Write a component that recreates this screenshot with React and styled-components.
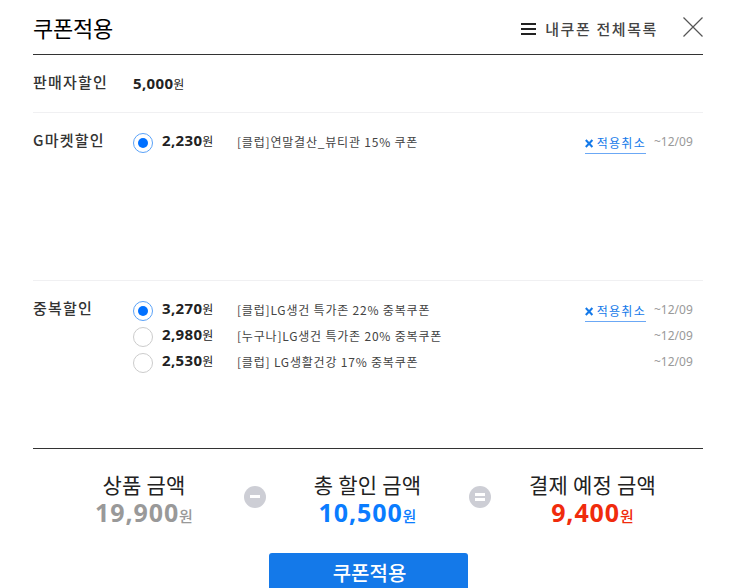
import React, { useState } from 'react';
import styled, { createGlobalStyle } from 'styled-components';

const GlobalStyle = createGlobalStyle`
  * {
    box-sizing: border-box;
  }
  body {
    margin: 0;
    overflow: hidden;
    background-color: #fff;
    font-family: 'Noto Sans', 'Noto Sans CJK KR', sans-serif;
    color: #222;
  }
`;

const Layer = styled.div`
  width: 736px;
  height: 588px;
  padding: 0 33px;
  overflow: hidden;
`;

const Header = styled.header`
  display: flex;
  align-items: center;
  height: 55px;
  border-bottom: 1px solid #333;
`;

const Title = styled.h1`
  flex: 1;
  margin: 0;
  font: 400 22px/30px 'Noto Sans CJK KR', sans-serif;
  letter-spacing: -0.2px;
  color: #000;
`;

const ListButton = styled.button`
  display: flex;
  align-items: center;
  gap: 9px;
  margin: 4px 25px 0 0;
  padding: 0;
  border: 0;
  background: none;
  font: 500 15px/20px 'Noto Sans CJK KR', sans-serif;
  letter-spacing: 1.6px;
  color: #444;
`;

const CloseButton = styled.button`
  display: flex;
  padding: 0;
  border: 0;
  background: none;
`;

const Section = styled.section`
  display: flex;
  height: ${({ $height }) => $height}px;
  padding-top: 17px;
  border-bottom: 1px solid ${({ $last }) => ($last ? '#333' : '#f0f0f2')};
`;

const Label = styled.h2`
  width: 100px;
  margin: -1px 0 0;
  font: 500 15px/21px 'Noto Sans CJK KR', sans-serif;
  letter-spacing: 1.2px;
  color: #333;
`;

const Options = styled.div`
  flex: 1;
`;

const Option = styled.div`
  display: flex;
  align-items: center;
  height: 26px;
  padding-right: 10px;
`;

const Radio = styled.button`
  display: flex;
  align-items: center;
  justify-content: center;
  width: 20px;
  height: 20px;
  margin-right: 9px;
  padding: 0;
  border: 1px solid ${({ $checked }) => ($checked ? '#5aa2f8' : '#ccc')};
  border-radius: 50%;
  background-color: #fff;

  &::after {
    content: '';
    width: 10px;
    height: 10px;
    border-radius: 50%;
    background-color: ${({ $checked }) => ($checked ? '#0070ff' : '#fff')};
  }
`;

const Price = styled.span`
  width: 75px;
  margin-top: ${({ $single }) => ($single ? -3 : -5)}px;
  font-size: 15px;
  line-height: 20px;
  font-weight: 700;
  letter-spacing: 0.35px;
  white-space: nowrap;
`;

const Won = styled.span`
  font-family: 'Noto Sans CJK KR', sans-serif;
  font-size: ${({ $size }) => $size}px;
  font-weight: ${({ $weight }) => $weight || 400};
  letter-spacing: 0;
`;

const CouponName = styled.span`
  flex: 1;
  margin-top: -2px;
  font: 400 12px/18px 'Noto Sans CJK KR', sans-serif;
  letter-spacing: 0.8px;
  white-space: nowrap;
  color: #444;
`;

const CancelButton = styled.button`
  display: flex;
  align-items: center;
  gap: 3px;
  height: 21px;
  margin: 1px 8px 0 0;
  padding: 0;
  border: 0;
  border-bottom: 1px solid #6ba8f5;
  background: none;
  font: 400 12px/18px 'Noto Sans CJK KR', sans-serif;
  letter-spacing: 1.3px;
  color: #1479e9;
`;

const DueDate = styled.span`
  width: 39px;
  margin-top: -3px;
  font-size: 12px;
  line-height: 18px;
  white-space: nowrap;
  color: #999;
`;

const Summary = styled.div`
  display: grid;
  grid-template-columns: 200px 22px 203px 22px 203px;
  align-items: center;
  height: 104px;
  padding: 0 0 8px 11px;
`;

const Total = styled.div`
  padding-top: 6px;
  text-align: center;
  white-space: nowrap;
  color: ${({ $color }) => $color};
`;

const TotalLabel = styled.div`
  font: 400 21px/28px 'Noto Sans CJK KR', sans-serif;
  letter-spacing: 0.2px;
  color: #222;
`;

const TotalValue = styled.div`
  font-size: 25px;
  line-height: 28px;
  font-weight: 700;
  letter-spacing: 0.9px;
`;

const ApplyButton = styled.button`
  display: block;
  width: 199px;
  height: 40px;
  margin: 0 auto;
  padding: 0 0 0 3px;
  border: 0;
  border-radius: 3px;
  background-color: #1479e9;
  font: 500 20px/40px 'Noto Sans CJK KR', sans-serif;
  color: #fff;
`;

const marketCoupons = [
  { price: '2,230', name: '[클럽]연말결산_뷰티관 15% 쿠폰', due: '~12/09' }
];

const extraCoupons = [
  { price: '3,270', name: '[클럽]LG생건 특가존 22% 중복쿠폰', due: '~12/09' },
  { price: '2,980', name: '[누구나]LG생건 특가존 20% 중복쿠폰', due: '~12/09' },
  { price: '2,530', name: '[클럽] LG생활건강 17% 중복쿠폰', due: '~12/09' }
];

const CouponOptions = ({ coupons }) => {
  const [selected, setSelected] = useState(0);

  return (
    <Options>
      {coupons.map((coupon, i) => (
        <Option key={coupon.name}>
          <Radio $checked={selected === i} onClick={() => setSelected(i)} />
          <Price>
            {coupon.price}
            <Won $size={12}>원</Won>
          </Price>
          <CouponName>{coupon.name}</CouponName>
          {selected === i && (
            <CancelButton onClick={() => setSelected(null)}>
              <svg width="9" height="9" viewBox="0 0 9 9">
                <path d="M0.8 1l6.6 7M7.4 1l-6.6 7" stroke="#1479e9" strokeWidth="2" />
              </svg>
              적용취소
            </CancelButton>
          )}
          <DueDate>{coupon.due}</DueDate>
        </Option>
      ))}
    </Options>
  );
};

const SignIcon = ({ equal }) => (
  <svg width="22" height="22" viewBox="0 0 22 22">
    <circle cx="11" cy="11" r="11" fill="#cdced5" />
    {equal ? (
      <path d="M6 7h10v3H6zM6 12h10v3H6z" fill="#fff" />
    ) : (
      <path d="M6 9h10v3H6z" fill="#fff" />
    )}
  </svg>
);

const TotalItem = ({ label, value, color }) => (
  <Total $color={color}>
    <TotalLabel>{label}</TotalLabel>
    <TotalValue>
      {value}
      <Won $size={15} $weight={500}>원</Won>
    </TotalValue>
  </Total>
);

const App = () => (
  <>
    <GlobalStyle />
    <Layer>
      <Header>
        <Title>쿠폰적용</Title>
        <ListButton>
          <svg width="15" height="12" viewBox="0 0 15 12">
            <path d="M0 0h15v2H0zM0 5h15v2H0zM0 10h15v2H0z" fill="#222" />
          </svg>
          내쿠폰 전체목록
        </ListButton>
        <CloseButton>
          <svg width="20" height="20" viewBox="0 0 20 20">
            <path d="M0.5 0.5l19 19M19.5 0.5l-19 19" stroke="#555" strokeWidth="1.2" />
          </svg>
        </CloseButton>
      </Header>
      <Section $height={58}>
        <Label>판매자할인</Label>
        <Options>
          <Option>
            <Price $single>
              5,000
              <Won $size={12}>원</Won>
            </Price>
          </Option>
        </Options>
      </Section>
      <Section $height={168}>
        <Label>G마켓할인</Label>
        <CouponOptions coupons={marketCoupons} />
      </Section>
      <Section $height={168} $last>
        <Label>중복할인</Label>
        <CouponOptions coupons={extraCoupons} />
      </Section>
      <Summary>
        <TotalItem label="상품 금액" value="19,900" color="#999" />
        <SignIcon />
        <TotalItem label="총 할인 금액" value="10,500" color="#0a7cff" />
        <SignIcon equal />
        <TotalItem label="결제 예정 금액" value="9,400" color="#f02b0c" />
      </Summary>
      <ApplyButton>쿠폰적용</ApplyButton>
    </Layer>
  </>
);

export default App;
